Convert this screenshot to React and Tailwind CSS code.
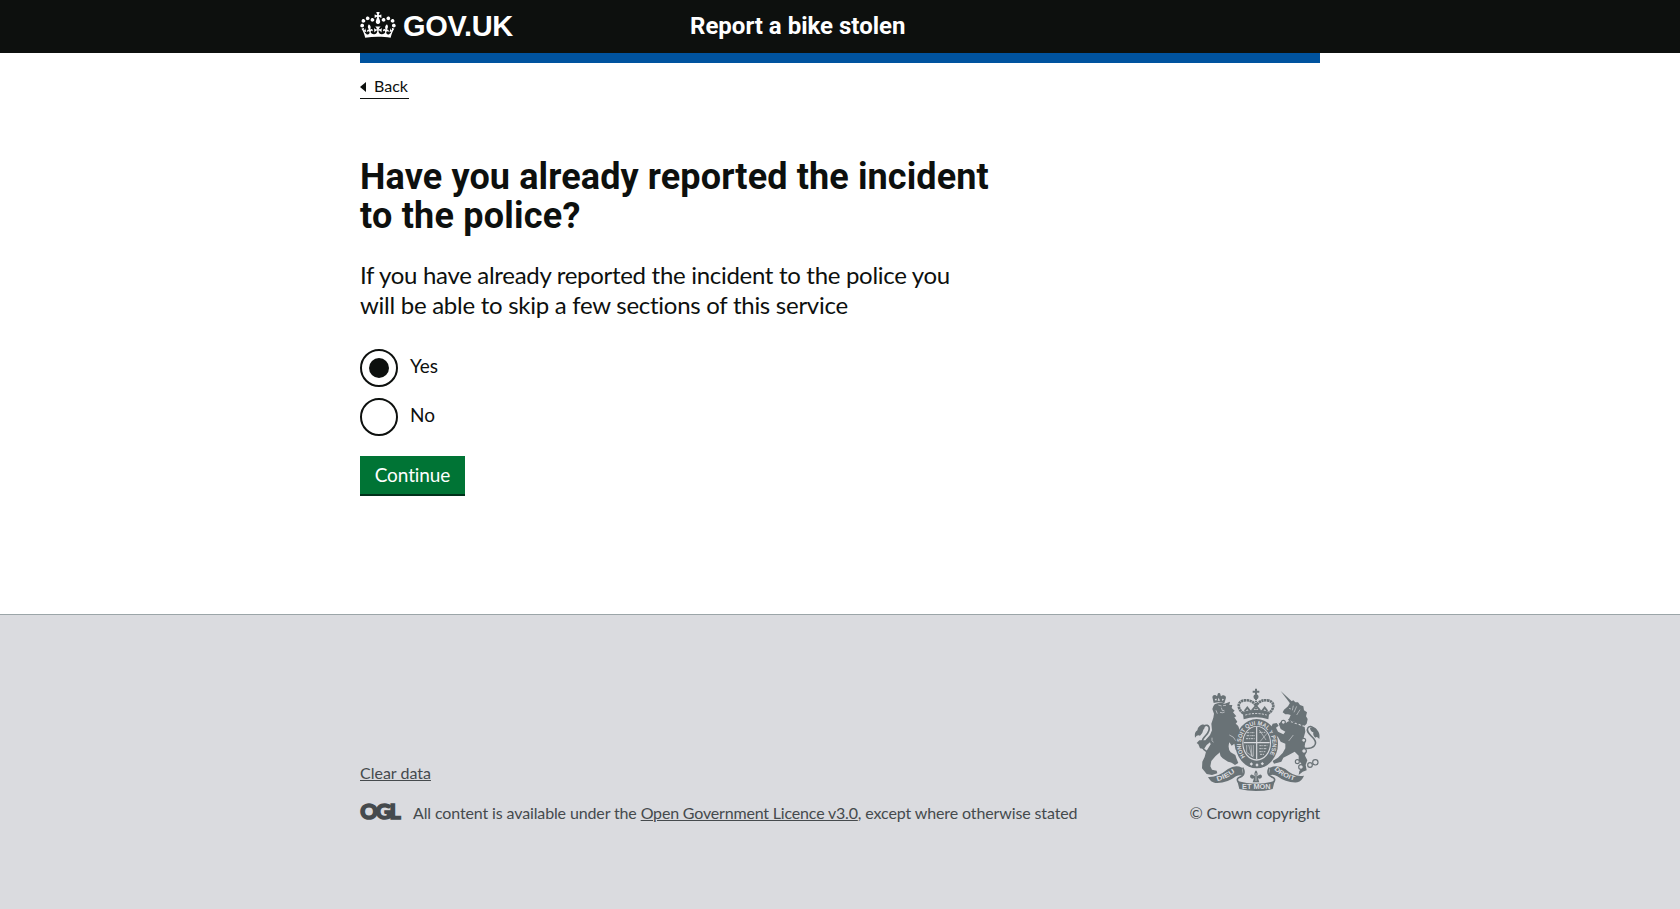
import React from "react";

function Crown() {
  return (
    <svg aria-hidden="true" viewBox="0 0 132 97" className="h-[26px] w-9 shrink-0 fill-white">
      <path
        fillRule="evenodd"
        d="M25 30.2c3.5 1.5 7.7-.2 9.1-3.7 1.5-3.6-.2-7.8-3.9-9.2-3.6-1.4-7.6.3-9.1 3.9-1.4 3.5.3 7.5 3.9 9zM9 39.5c3.6 1.5 7.8-.2 9.2-3.7 1.5-3.6-.2-7.8-3.9-9.1-3.6-1.5-7.6.2-9.1 3.8-1.4 3.5.3 7.5 3.8 9zM4.4 57.2c3.5 1.5 7.7-.2 9.1-3.8 1.5-3.6-.2-7.7-3.9-9.1-3.5-1.5-7.6.3-9.1 3.8-1.4 3.5.3 7.6 3.9 9.1zm38.3-21.4c3.5 1.5 7.7-.2 9.1-3.8 1.5-3.6-.2-7.7-3.9-9.1-3.6-1.5-7.6.3-9.1 3.8-1.3 3.6.4 7.7 3.9 9.1zm64.4-5.6c-3.6 1.5-7.8-.2-9.1-3.7-1.5-3.6.2-7.8 3.8-9.2 3.6-1.4 7.7.3 9.2 3.9 1.3 3.5-.4 7.5-3.9 9zm15.9 9.3c-3.6 1.5-7.7-.2-9.1-3.7-1.5-3.6.2-7.8 3.7-9.1 3.6-1.5 7.7.2 9.2 3.8 1.5 3.5-.3 7.5-3.8 9zm4.7 17.7c-3.6 1.5-7.8-.2-9.2-3.8-1.5-3.6.2-7.7 3.9-9.1 3.6-1.5 7.7.3 9.2 3.8 1.3 3.5-.4 7.6-3.9 9.1zM89.3 35.8c-3.6 1.5-7.8-.2-9.2-3.8-1.4-3.6.2-7.7 3.9-9.1 3.6-1.5 7.7.3 9.2 3.8 1.4 3.6-.3 7.7-3.9 9.1zM69.7 17.7l8.9 4.7V9.3l-8.9 2.8c-.2-.3-.5-.6-.9-.9L72.4 0H59.6l3.5 11.2c-.3.3-.6.5-.9.9l-8.8-2.8v13.1l8.8-4.7c.3.3.6.7.9.9l-5 15.4v.1c-.2.8-.4 1.6-.4 2.4 0 4.1 3.1 7.5 7 8.1h.2c.3 0 .7.1 1 .1.4 0 .7 0 1-.1h.2c4-.6 7.1-4.1 7.1-8.1 0-.8-.1-1.7-.4-2.4V34l-5.1-15.4c.4-.2.7-.6 1-.9zM66 92.8c16.9 0 32.8 1.1 47.1 3.2 4-16.9 8.9-26.7 14-33.5l-9.6-3.4c1 4.9 1.1 7.2 0 10.2-1.5-1.4-3-4.3-4.2-8.7L108.6 76c2.8-2 5-3.2 7.5-3.3-4.4 9.4-10 11.9-13.6 11.2-4.3-.8-6.3-4.6-5.6-7.9 1-4.7 5.7-5.9 8-.5 4.3-8.7-3-11.4-7.6-8.8 7.1-7.2 7.9-13.5 2.1-21.1-8 6.1-8.1 12.3-4.5 20.8-4.7-5.4-12.1-2.5-9.5 6.2 3.4-5.2 7.9-2 7.2 3.1-.6 4.3-6.4 7.8-13.5 7.2-10.3-.9-10.9-8-11.2-13.8 2.5-.5 7.1 1.8 11 7.3L80.2 60c-4.1 4.4-8 5.3-12.3 5.4 1.4-4.4 8-11.6 8-11.6H55.5s6.4 7.2 7.9 11.6c-4.2-.1-8-1-12.3-5.4l1.4 16.4c3.9-5.5 8.5-7.7 10.9-7.3-.3 5.8-.9 12.8-11.1 13.8-7.2.6-12.9-2.9-13.5-7.2-.7-5 3.8-8.3 7.1-3.1 2.7-8.7-4.6-11.6-9.4-6.2 3.7-8.5 3.6-14.7-4.6-20.8-5.8 7.6-5 13.9 2.2 21.1-4.7-2.6-11.9.1-7.7 8.8 2.3-5.5 7.1-4.2 8.1.5.7 3.3-1.3 7.1-5.7 7.9-3.5.7-9-1.8-13.5-11.2 2.5.1 4.7 1.3 7.5 3.3l-4.7-15.4c-1.2 4.4-2.7 7.2-4.3 8.7-1.1-3-.9-5.3 0-10.2l-9.5 3.4c5 6.9 9.9 16.7 14 33.5 14.8-2.1 30.8-3.2 47.7-3.2z"
      />
    </svg>
  );
}

const INK = "#697276";
const PAPER = "#dadbdf";

function CoatOfArms() {
  return (
    <svg aria-hidden="true" viewBox="45 27 375 306" className="h-[102px] w-[125px] overflow-visible" fill={INK} fontFamily="'Liberation Sans', sans-serif" fontWeight="700">
      <defs>
        <path id="garter" d="M196 233 A 47 56 0 1 1 264 233" />
        <path id="ribbon-left" d="M112 306 Q 142 300 172 274" />
        <path id="ribbon-right" d="M282 271 Q 308 298 352 307" />
      </defs>

      {/* lion */}
      <g transform="translate(36 18)">
        <path d="M65 54 L61 36 q1-6 7-6 q5 0 6 4 q1-5 7-5 q6 0 7 5 q1-4 7-3 q7 1 7 7 L97 55 Q81 49 65 54z" />
        <circle cx="81" cy="28" r="4" />
        <path d="M68 42 l4 6 3-7z M80 38 l-3 9 h7z M90 41 l1 7 5-5z" fill={PAPER} />
        <path d="M68 58 Q82 50 98 56 L114 50 L112 60 L121 60 L119 69 L128 77 L123 82 L133 94 L127 97 L136 110 L131 116 Q143 122 142 140 L146 160 L142 176 L149 192 L143 202 L131 194 L127 176 L119 182 L112 172 Q106 190 116 202 L130 210 L134 222 L139 234 L129 240 Q120 232 108 230 L92 220 Q82 212 84 202 Q68 214 58 228 L55 244 L60 254 L74 257 L76 265 L60 270 L44 267 L30 250 L31 230 L38 216 L42 200 L56 178 L54 172 L44 180 L36 192 L24 190 L19 178 L14 174 L22 166 L40 166 L54 150 L60 136 L58 116 L64 98 L66 86 L61 72 L64 64z" />
        <path d="M46 201 C32 194 24 180 33 162 C40 150 56 142 51 126 C46 115 32 122 24 138" fill="none" stroke={INK} strokeWidth="5" />
        <path d="M34 118 Q18 122 16 136 Q6 142 9 158 Q16 148 24 152 Q32 146 34 134 Q42 128 34 118z" />
        <path d="M79 60 l10 3 M93 62 l9 -1 M88 68 l3 9 6 -1 M84 82 q7 3 14 -1 M72 76 l4 10 M112 150 q14 4 20 18 M60 158 q-2 10 4 14" fill="none" stroke={PAPER} strokeWidth="2" />
      </g>

      {/* royal crown */}
      <path d="M225 29h6v6h7v6h-7v6h-6v-6h-7v-6h7z" />
      <circle cx="228" cy="53" r="7.5" />
      <path d="M190 103 C170 88 172 66 194 64 Q214 62 225 76 h6 Q242 62 262 64 C284 66 286 88 266 103" fill="none" stroke={INK} strokeWidth="8" strokeDasharray="7 1.5" />
      <path d="M228 58v40" stroke={INK} strokeWidth="6" strokeDasharray="5 2" />
      <path d="M194 96 l8-10 8 10 M216 94 l12-14 12 14 M246 96 l8-10 8 10" fill="none" stroke={INK} strokeWidth="6" />
      <path d="M188 98 Q228 86 268 98 L265 121 Q228 108 191 121z" />
      <path d="M196 108 Q228 99 260 108" fill="none" stroke={PAPER} strokeWidth="3" strokeDasharray="6 4" />

      {/* garter and shield */}
      <ellipse cx="230" cy="194" rx="64" ry="74" />
      <ellipse cx="230" cy="193" rx="43" ry="52" fill={PAPER} />
      <ellipse cx="230" cy="192" rx="40" ry="49" />
      <path d="M230 144v96M191 191h78" stroke={PAPER} strokeWidth="3.5" />
      <path d="M200 161h24M200 170h25M198 179h26M238 160h18M238 200h24M238 209h22M238 218h18M240 226h12" stroke={PAPER} strokeWidth="2.5" strokeDasharray="7 2 3 2" />
      <path d="M238 153l20 30M262 162l-22 26M200 198v22M206 198l10 34M213 198l3 34M220 198v34M200 220l20 14" stroke={PAPER} strokeWidth="1.8" />
      <path d="M214 250l5 5-5 5-5-5zM231 253l5 5-5 5-5-5zM247 249l5 5-5 5-5-5z" fill={PAPER} />
      <text fill={PAPER} fontSize="18">
        <textPath href="#garter" textLength="236" lengthAdjust="spacingAndGlyphs">HONI SOIT QUI MAL Y PENSE</textPath>
      </text>

      {/* unicorn */}
      <g transform="translate(228 18)">
        <path d="M74 18 L109 50 L103 56z" />
        <path d="M104 50 L112 46 L118 52 L126 52 L132 60 L142 64 L144 76 L153 82 L150 94 L155 102 L152 116 L146 122 L98 104 L104 90 L96 88 L88 88 L80 82 L84 74 L96 64z" />
        <path d="M97 109 L146 126 L148 140 L143 158 L148 172 L146 184 L152 198 L147 212 L154 226 L149 240 L152 256 L140 260 L128 270 L130 258 L138 250 L136 236 L128 226 L128 212 L116 200 L98 210 L82 218 L76 230 L54 236 L50 228 L66 218 L80 204 L88 190 L88 176 L74 170 L66 156 L52 144 L46 126 L50 116 L62 114 L68 122 L60 128 L66 140 L82 148 L88 140 L74 132 L68 116 L78 108 L90 114z" />
        <path d="M98 102 l4 8 7-5 4 9 8-5 4 9 8-5 4 8 8-4" fill="none" stroke={INK} strokeWidth="4" />
        <path d="M99 70 l6 2 M112 62 l-3 14 M122 64 l-8 18 M132 74 l-10 16 M112 150 l-14 18" stroke={PAPER} strokeWidth="1.8" />
        <path d="M148 190 C172 192 186 178 174 162 C164 150 148 140 156 128 C160 122 168 124 174 130" fill="none" stroke={INK} strokeWidth="4.5" />
        <path d="M162 128 Q178 124 184 136 Q193 146 190 162 Q182 152 178 158 Q170 152 172 142 Q162 138 162 128z" />
        <g fill={PAPER} stroke={INK} strokeWidth="3.5">
          <circle cx="82" cy="112" r="6" />
          <circle cx="143" cy="166" r="6" />
          <circle cx="144" cy="198" r="7" />
          <circle cx="124" cy="230" r="6" />
          <circle cx="135" cy="246" r="7" />
          <circle cx="162" cy="240" r="7" />
          <circle cx="178" cy="232" r="8" />
        </g>
      </g>

      {/* motto ribbon and plant badge */}
      <path d="M84 294 Q112 296 144 270 Q166 256 186 266 L190 290 Q178 286 168 292 Q140 314 106 312 Q92 310 84 294z" />
      <path d="M372 290 Q344 296 316 270 Q292 256 270 266 L266 290 Q280 284 292 292 Q318 312 352 310 Q366 306 372 290z" />
      <path d="M172 306 Q228 322 284 306 L278 330 Q228 342 178 330z" />
      <path d="M188 266 Q200 288 176 296 Q168 302 176 310 M268 266 Q256 288 280 296 Q288 302 280 310" fill="none" stroke={INK} strokeWidth="5" />
      <path d="M228 274 Q236 284 231 292 Q246 280 246 294 Q242 302 234 298 L238 310 H218 L222 298 Q214 302 210 294 Q210 280 225 292 Q220 284 228 274z" />
      <path d="M228 282v24" stroke={PAPER} strokeWidth="2" />
      <g fill={PAPER}>
        <text fontSize="20"><textPath href="#ribbon-left" textLength="60" lengthAdjust="spacingAndGlyphs">DIEU</textPath></text>
        <text fontSize="20"><textPath href="#ribbon-right" textLength="70" lengthAdjust="spacingAndGlyphs">DROIT</textPath></text>
        <text x="186" y="331" fontSize="21" textLength="86" lengthAdjust="spacingAndGlyphs">ET MON</text>
      </g>
    </svg>
  );
}

function Radio({ label, checked }) {
  return (
    <label className="flex h-[38px] items-center gap-3">
      <span className="flex size-[38px] items-center justify-center rounded-full border-2 border-[#0d100e]">
        {checked && <span className="size-5 rounded-full bg-[#0d100e]" />}
      </span>
      <span className="-mt-1 text-[19px] leading-6">{label}</span>
    </label>
  );
}

export default function App() {
  return (
    <div className="flex h-[909px] flex-col bg-white font-['Lato',sans-serif] text-[#0d100e]">
      <header className="h-[53px] bg-[#0d100e]">
        <div className="mx-auto flex h-full w-[960px] text-white">
          <a className="flex w-[330px] items-start pt-3">
            <Crown />
            <span className="-mt-px ml-[7px] font-['Liberation_Sans',sans-serif] text-[29px] leading-[30px] font-bold tracking-[-0.3px]">GOV.UK</span>
          </a>
          <a className="pt-[11px] font-['Roboto',sans-serif] text-[24px] leading-[30px] font-bold">Report a bike stolen</a>
        </div>
      </header>

      <div className="mx-auto w-[960px]">
        <div className="h-[10px] bg-[#00539f]" />
        <a className="mt-[13px] flex h-[23px] w-[49px] items-center gap-2 border-b border-[#0d100e] text-[16px] leading-5">
          <svg aria-hidden="true" viewBox="0 0 6 10" className="h-[10px] w-[6px] fill-current"><path d="M6 0v10L0 5z" /></svg>
          <span className="-mt-[3px]">Back</span>
        </a>

        <main className="pt-[59px]">
          <h1 className="font-['Roboto',sans-serif] text-[36px] leading-[39px] font-bold">
            <span className="block tracking-[0.12px]">Have you already reported the incident</span>
            <span className="block tracking-[0.22px]">to the police?</span>
          </h1>
          <p className="mt-6 text-[24px] leading-[30px]">
            <span className="block tracking-[-0.3px]">If you have already reported the incident to the police you</span>
            <span className="block tracking-[-0.27px]">will be able to skip a few sections of this service</span>
          </p>
          <div className="mt-[29px] flex flex-col gap-[11px]">
            <Radio label="Yes" checked />
            <Radio label="No" />
          </div>
          <button className="mt-5 flex h-10 w-[105px] items-center justify-center border-b-2 border-[#00301a] bg-[#007435] text-[19px] leading-6 tracking-[-0.1px] text-white">
            Continue
          </button>
        </main>
      </div>

      <footer className="mt-auto h-[295px] border-t border-[#9ba5a8] bg-[#dadbdf] text-[16px] leading-5 text-[#454a4d]">
        <div className="mx-auto flex h-[208px] w-[960px] items-end justify-between">
          <div className="flex flex-col gap-5">
            <a className="underline underline-offset-1">Clear data</a>
            <div className="flex items-center">
              <svg aria-label="OGL" viewBox="0 0 41 17" className="-mt-1 mr-3 h-[17px] w-[41px] overflow-visible" fill="currentColor">
                <text x="0.2" y="16" fontFamily="Lato" fontWeight="900" fontSize="21.5" textLength="40.5" lengthAdjust="spacing" stroke="currentColor" strokeWidth="1.5">OGL</text>
              </svg>
              <p>
                <span className="tracking-[-0.13px]">All content is available under the </span>
                <a className="tracking-[-0.18px] underline underline-offset-1">Open Government Licence v3.0</a>
                <span className="tracking-[-0.12px]">, except where otherwise stated</span>
              </p>
            </div>
          </div>
          <div className="flex flex-col items-end gap-[13px]">
            <CoatOfArms />
            <span className="tracking-[-0.22px]">© Crown copyright</span>
          </div>
        </div>
      </footer>
    </div>
  );
}
